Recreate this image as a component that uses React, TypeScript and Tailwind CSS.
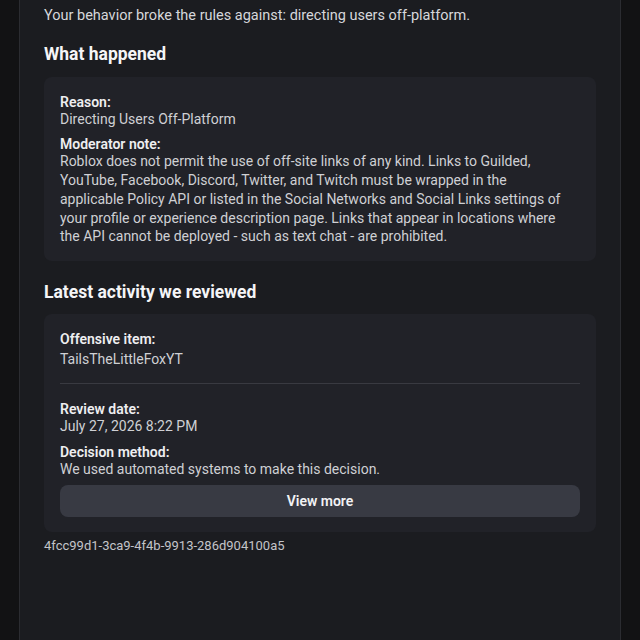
import React from "react";

function Label({ children, className = "" }: { children: React.ReactNode; className?: string }) {
  return (
    <div className={"text-[14px] leading-[16px] font-semibold text-[#eeeef0] " + className}>{children}</div>
  );
}

function Value({ children, className = "" }: { children: React.ReactNode; className?: string }) {
  return <div className={"text-[14px] leading-[18.75px] text-[#cfd0d4] " + className}>{children}</div>;
}

export default function App() {
  return (
    <div
      className="w-full h-[640px] bg-[#121214] flex justify-center overflow-hidden"
      style={{ fontFamily: "Roboto, 'Liberation Sans', sans-serif" }}
    >
      <div className="w-[602px] h-full border-x border-[#2b2c31] bg-[#1b1c20] px-6 pt-[6px]">
        <p className="text-[14.5px] leading-[20px] text-[#d6d7db]">
          Your behavior broke the rules against: directing users off-platform.
        </p>

        <h2 className="mt-4 text-[17.5px] leading-[24px] font-bold text-[#f5f5f7]">What happened</h2>
        <div className="mt-[11px] rounded-lg bg-[#212228] px-4 pt-[17px] pb-[15px]">
          <Label>Reason:</Label>
          <Value>Directing Users Off-Platform</Value>
          <Label className="mt-[7.5px]">Moderator note:</Label>
          <Value>
            Roblox does not permit the use of off-site links of any kind. Links to Guilded,
            <br />
            YouTube, Facebook, Discord, Twitter, and Twitch must be wrapped in the
            <br />
            applicable Policy API or listed in the Social Networks and Social Links settings of
            <br />
            your profile or experience description page. Links that appear in locations where
            <br />
            the API cannot be deployed - such as text chat - are prohibited.
          </Value>
        </div>

        <h2 className="mt-[19px] text-[17.5px] leading-[24px] font-bold text-[#f5f5f7]">
          Latest activity we reviewed
        </h2>
        <div className="mt-[10px] rounded-lg bg-[#212228] px-4 pt-[17px] pb-[15px]">
          <Label>Offensive item:</Label>
          <Value className="mt-[3px]">TailsTheLittleFoxYT</Value>
          <div className="mt-[14px] h-px bg-[#393a41]" />
          <Label className="mt-[17.5px]">Review date:</Label>
          <Value>July 27, 2026 8:22 PM</Value>
          <Label className="mt-[7.5px]">Decision method:</Label>
          <Value>We used automated systems to make this decision.</Value>
          <button className="mt-[7px] w-full h-8 rounded-lg bg-[#383a43] text-[14px] font-semibold text-[#f2f2f4] flex items-center justify-center">
            View more
          </button>
        </div>

        <p className="mt-[5px] text-[13px] leading-[18px] text-[#c3c4c9]">4fcc99d1-3ca9-4f4b-9913-286d904100a5</p>
      </div>
    </div>
  );
}
